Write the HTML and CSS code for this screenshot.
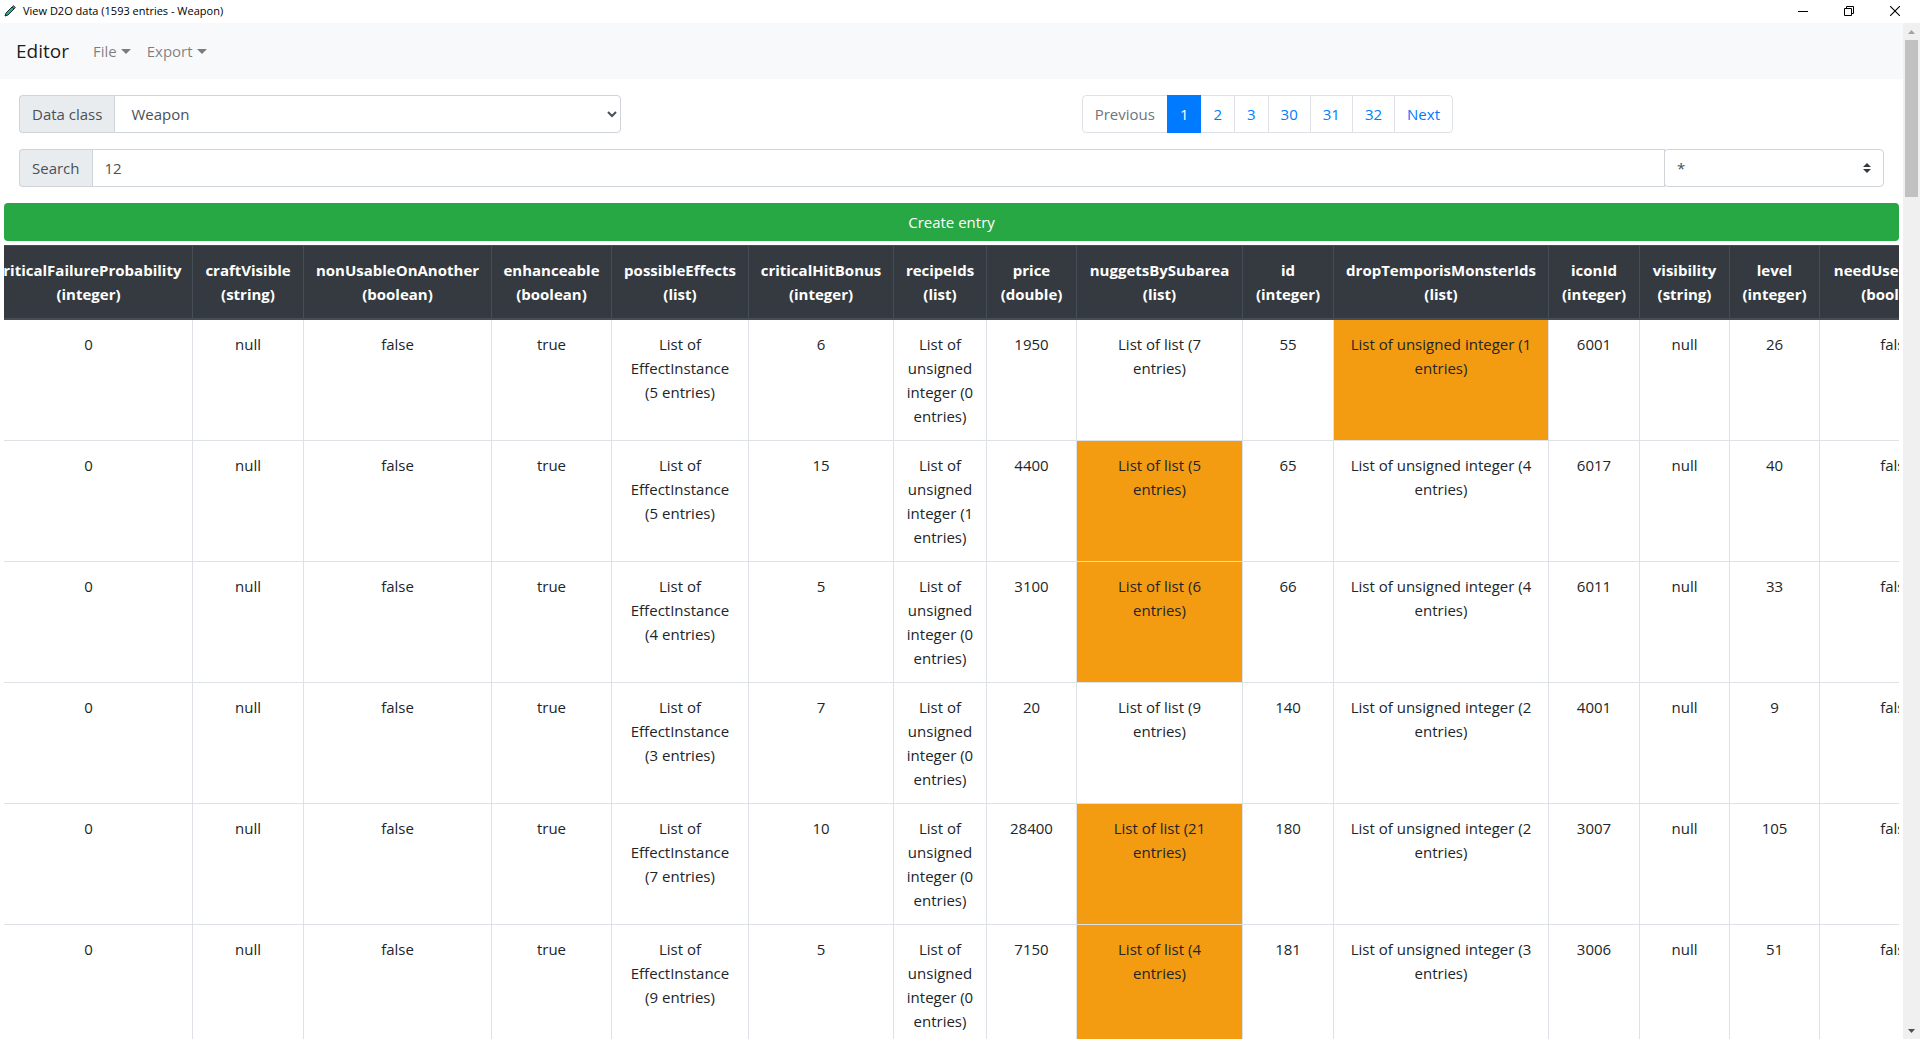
FILE: index.html
```html
<!DOCTYPE html>
<html lang="en">
<head>
<meta charset="utf-8">
<title>View D2O data (1593 entries - Weapon)</title>
<link rel="stylesheet" href="styles.css">
</head>
<body>
<header class="titlebar">
  <svg class="app-icon" width="12" height="12" viewBox="0 0 12 12" aria-hidden="true">
    <path d="M1 11 L2 8 L8 2 L10 4 L4 10 Z" fill="#2fae8c" stroke="#1c2b33" stroke-width="1"/>
    <path d="M8 2 L9.5 .6 L11.4 2.5 L10 4 Z" fill="#d5526a" stroke="#1c2b33" stroke-width=".8"/>
    <path d="M1 11 L1.6 9 L3 10.4 Z" fill="#1c2b33"/>
  </svg>
  <span class="window-title">View D2O data (1593 entries - Weapon)</span>
  <div class="window-controls">
    <button type="button" aria-label="Minimize"><svg width="10" height="10" viewBox="0 0 10 10"><path d="M0 5.5h10" stroke="#000"/></svg></button>
    <button type="button" aria-label="Restore"><svg width="10" height="10" viewBox="0 0 10 10"><path d="M.5 2.5h7v7h-7zM2.5 2.5v-2h7v7h-2" fill="none" stroke="#000"/></svg></button>
    <button type="button" aria-label="Close"><svg width="10" height="10" viewBox="0 0 10 10"><path d="M0 0l10 10M10 0L0 10" stroke="#000" stroke-width="1.1"/></svg></button>
  </div>
</header>
<div class="viewport">
  <div class="page">
    <nav class="navbar">
      <a class="brand" href="#">Editor</a>
      <a class="nav-link" href="#">File</a>
      <a class="nav-link" href="#">Export</a>
    </nav>
    <main class="content">
      <div class="toolbar">
        <div class="input-group class-picker">
          <label class="addon" for="data-class">Data class</label>
          <select class="control" id="data-class"><option>Weapon</option></select>
        </div>
        <ul class="pagination">
          <li><span class="page-link disabled">Previous</span></li>
          <li><a class="page-link active" href="#">1</a></li>
          <li><a class="page-link" href="#">2</a></li>
          <li><a class="page-link" href="#">3</a></li>
          <li><a class="page-link" href="#">30</a></li>
          <li><a class="page-link" href="#">31</a></li>
          <li><a class="page-link" href="#">32</a></li>
          <li><a class="page-link" href="#">Next</a></li>
        </ul>
      </div>
      <div class="input-group search">
        <label class="addon" for="search">Search</label>
        <input class="control" id="search" type="text" value="12">
        <select class="control field-select" aria-label="Search field"><option>*</option></select>
      </div>
      <button class="create" type="button">Create entry</button>
      <div class="table-wrap">
        <table class="data">
          <colgroup>
            <col class="w-failure"><col class="w-craft"><col class="w-unusable"><col class="w-enhance"><col class="w-effects"><col class="w-bonus"><col class="w-recipes"><col class="w-number"><col class="w-nuggets"><col class="w-id"><col class="w-drops"><col class="w-id"><col class="w-number"><col class="w-number"><col class="w-confirm">
          </colgroup>
          <thead>
            <tr><th>criticalFailureProbability<br>(integer)</th><th>craftVisible<br>(string)</th><th>nonUsableOnAnother<br>(boolean)</th><th>enhanceable<br>(boolean)</th><th>possibleEffects<br>(list)</th><th>criticalHitBonus<br>(integer)</th><th>recipeIds<br>(list)</th><th>price<br>(double)</th><th>nuggetsBySubarea<br>(list)</th><th>id<br>(integer)</th><th>dropTemporisMonsterIds<br>(list)</th><th>iconId<br>(integer)</th><th>visibility<br>(string)</th><th>level<br>(integer)</th><th>needUseConfirm<br>(boolean)</th></tr>
          </thead>
          <tbody>
            <tr><td>0</td><td>null</td><td>false</td><td>true</td><td>List of<br>EffectInstance<br>(5 entries)</td><td>6</td><td>List of<br>unsigned<br>integer (0<br>entries)</td><td>1950</td><td>List of list (7<br>entries)</td><td>55</td><td class="marked">List of unsigned integer (1<br>entries)</td><td>6001</td><td>null</td><td>26</td><td>false</td></tr>
            <tr><td>0</td><td>null</td><td>false</td><td>true</td><td>List of<br>EffectInstance<br>(5 entries)</td><td>15</td><td>List of<br>unsigned<br>integer (1<br>entries)</td><td>4400</td><td class="marked">List of list (5<br>entries)</td><td>65</td><td>List of unsigned integer (4<br>entries)</td><td>6017</td><td>null</td><td>40</td><td>false</td></tr>
            <tr><td>0</td><td>null</td><td>false</td><td>true</td><td>List of<br>EffectInstance<br>(4 entries)</td><td>5</td><td>List of<br>unsigned<br>integer (0<br>entries)</td><td>3100</td><td class="marked">List of list (6<br>entries)</td><td>66</td><td>List of unsigned integer (4<br>entries)</td><td>6011</td><td>null</td><td>33</td><td>false</td></tr>
            <tr><td>0</td><td>null</td><td>false</td><td>true</td><td>List of<br>EffectInstance<br>(3 entries)</td><td>7</td><td>List of<br>unsigned<br>integer (0<br>entries)</td><td>20</td><td>List of list (9<br>entries)</td><td>140</td><td>List of unsigned integer (2<br>entries)</td><td>4001</td><td>null</td><td>9</td><td>false</td></tr>
            <tr><td>0</td><td>null</td><td>false</td><td>true</td><td>List of<br>EffectInstance<br>(7 entries)</td><td>10</td><td>List of<br>unsigned<br>integer (0<br>entries)</td><td>28400</td><td class="marked">List of list (21<br>entries)</td><td>180</td><td>List of unsigned integer (2<br>entries)</td><td>3007</td><td>null</td><td>105</td><td>false</td></tr>
            <tr><td>0</td><td>null</td><td>false</td><td>true</td><td>List of<br>EffectInstance<br>(9 entries)</td><td>5</td><td>List of<br>unsigned<br>integer (0<br>entries)</td><td>7150</td><td class="marked">List of list (4<br>entries)</td><td>181</td><td>List of unsigned integer (3<br>entries)</td><td>3006</td><td>null</td><td>51</td><td>false</td></tr>
          </tbody>
        </table>
      </div>
    </main>
  </div>
  <div class="scrollbar" aria-hidden="true">
    <svg width="17" height="17" viewBox="0 0 17 17"><path d="M5 11h7L8.500 7z" fill="#a3a3a3"/></svg>
    <div class="track"><div class="thumb"></div></div>
    <svg width="17" height="17" viewBox="0 0 17 17"><path d="M5 7h7L8.500 11z" fill="#505050"/></svg>
  </div>
</div>
</body>
</html>
```
FILE: styles.css
```css
* { box-sizing: border-box; }

body {
  margin: 0;
  height: 100vh;
  display: flex;
  flex-direction: column;
  overflow: hidden;
  background: #fff;
  color: #212529;
  font: 15px/24px "Open Sans", "Noto Sans", sans-serif;
}

button, input, select { font: inherit; margin: 0; }
a { text-decoration: none; }

/* Window frame */
.titlebar {
  display: flex;
  align-items: center;
  flex: none;
  height: 23px;
  padding: 0 2px 2px 4px;
  color: #000;
}
.window-title { margin-left: 7px; font-size: 11px; }
.window-controls { display: flex; margin-left: auto; }
.window-controls button {
  display: flex;
  align-items: center;
  justify-content: center;
  width: 46px;
  height: 20px;
  padding: 0;
  border: 0;
  background: none;
}

.viewport { display: flex; flex: 1; min-height: 0; }
.page { flex: 1; min-width: 0; overflow: hidden; }

.scrollbar {
  display: flex;
  flex-direction: column;
  flex: none;
  width: 17px;
  background: #f0f0f0;
}
.scrollbar svg { flex: none; }
.track { flex: 1; padding: 0 2px; }
.thumb { height: 16%; background: #c1c1c1; }

/* Navigation */
.navbar {
  display: flex;
  align-items: center;
  height: 56px;
  padding: 0 16px;
  background: #f8f9fa;
}
.brand { margin-right: 16px; font-size: 19px; color: rgba(0, 0, 0, .9); }
.nav-link {
  display: flex;
  align-items: center;
  gap: 4px;
  padding: 8px;
  color: rgba(0, 0, 0, .5);
}
.nav-link::after {
  content: "";
  border: 5px solid transparent;
  border-top-color: currentColor;
  border-bottom: 0;
}

/* Filters */
.content { padding: 16px 4px 0; }
.toolbar { display: grid; grid-template-columns: 1fr 2fr; margin-bottom: 16px; }
.input-group { display: flex; height: 38px; margin: 0 15px; }
.addon {
  display: flex;
  align-items: center;
  padding: 0 12px;
  border: 1px solid #ced4da;
  border-right: 0;
  border-radius: 4px 0 0 4px;
  background: #e9ecef;
  color: #495057;
}
.control {
  flex: 1;
  min-width: 0;
  padding: 0 12px;
  border: 1px solid #ced4da;
  border-radius: 0;
  background: #fff;
  color: #495057;
}
.class-picker .control { border-radius: 0 4px 4px 0; padding-right: 0; }
.field-select {
  flex: 0 0 220px;
  margin-left: -1px;
  appearance: none;
  border-radius: 4px;
  background: #fff url("data:image/svg+xml,%3Csvg xmlns='http://www.w3.org/2000/svg' viewBox='0 0 4 5'%3E%3Cpath fill='%23343a40' d='M2 0L0 2h4zm0 5L0 3h4z'/%3E%3C/svg%3E") no-repeat right 12px center / 8px 10px;
}

.pagination {
  display: flex;
  justify-content: center;
  margin: 0;
  padding: 0;
  list-style: none;
}
.page-link {
  display: block;
  padding: 6px 12px;
  margin-left: -1px;
  border: 1px solid #dee2e6;
  background: #fff;
  color: #007bff;
}
.page-link.disabled { color: #6c757d; }
.page-link.active {
  position: relative;
  border-color: #007bff;
  background: #007bff;
  color: #fff;
}
.pagination li:first-child .page-link { margin-left: 0; border-radius: 4px 0 0 4px; }
.pagination li:last-child .page-link { border-radius: 0 4px 4px 0; }

.create {
  display: block;
  width: 100%;
  height: 38px;
  margin: 16px 0 4px;
  border: 0;
  border-radius: 4px;
  background: #28a745;
  color: #fff;
}

/* Data table, shown scrolled sideways */
.table-wrap { overflow: hidden; }
.data {
  width: 1989px;
  margin-left: -20px;
  table-layout: fixed;
  border-collapse: collapse;
  text-align: center;
  white-space: nowrap;
}
.w-failure { width: 208px; }
.w-craft { width: 111px; }
.w-unusable { width: 188px; }
.w-enhance { width: 120px; }
.w-effects { width: 137px; }
.w-bonus { width: 145px; }
.w-recipes { width: 93px; }
.w-number { width: 90px; }
.w-id { width: 91px; }
.w-nuggets { width: 166px; }
.w-drops { width: 215px; }
.w-confirm { width: 154px; }
.data th, .data td {
  padding: 12px 0;
  border: 1px solid #dee2e6;
  vertical-align: top;
}
.data th {
  border-color: #454d55;
  border-bottom-width: 2px;
  background: #343a40;
  color: #fff;
  font-weight: 700;
}
.data .marked { background: #f39c12; }
```
